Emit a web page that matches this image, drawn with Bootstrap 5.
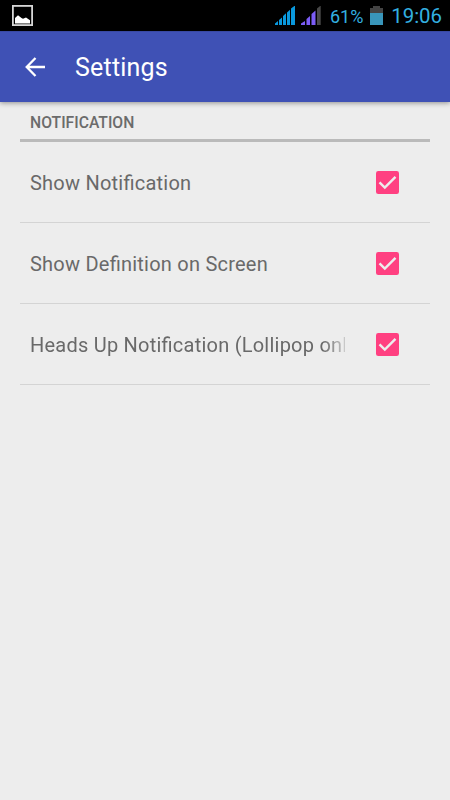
<!DOCTYPE html>
<html lang="en">
<head>
<meta charset="utf-8">
<meta name="viewport" content="width=device-width, initial-scale=1">
<title>Settings</title>
<link href="https://cdn.jsdelivr.net/npm/bootstrap@5.3.0/dist/css/bootstrap.min.css" rel="stylesheet">
<style>
body{background:#ededed;font-family:Roboto,"Liberation Sans",sans-serif;height:800px;overflow:hidden}
svg{display:block;flex:none}
.status-bar{height:31px;background:#000;color:#33b0e0;line-height:31px;padding:0 8px 0 12px}
.signals{gap:6px}
.battery-level{font-size:18px;margin:1px 6px 0 9px;width:34px;white-space:nowrap}
.clock{font-size:20.4px;margin:2px 0 0 7px;width:52px;display:flex;justify-content:flex-end;white-space:nowrap}
.app-bar{height:71px;padding:0 0 0 25px;background:#3f51b5;box-shadow:0 1px 5px rgba(0,0,0,.4);border-top:1px solid #3949a3;position:relative}
.app-title{font-size:25px;font-weight:400;line-height:30px;margin:2px 0 0 29px;letter-spacing:.2px}
.settings{padding:0 20px}
.section-head{height:40px;padding:10px 10px 0;font-size:15.7px;line-height:22px;font-weight:500;color:#6b6b6b;border-bottom:3px solid #bababa}
.setting{height:81px;padding:0 31px 0 10px;border-bottom:1px solid #d4d4d4;cursor:pointer}
.setting-name{width:315px;margin-top:2px;font-size:20px;line-height:28px;letter-spacing:.23px;color:#696969;white-space:nowrap;overflow:hidden;font-feature-settings:"liga" 1}
.fade-end{-webkit-mask-image:linear-gradient(to right,#000 293px,transparent 323px);mask-image:linear-gradient(to right,#000 293px,transparent 323px)}
</style>
<script src="https://cdn.jsdelivr.net/npm/bootstrap@5.3.0/dist/js/bootstrap.bundle.min.js"></script>
</head>
<body>
<div class="status-bar d-flex align-items-center">
  <svg width="21" height="21" viewBox="0 0 21 21"><rect x=".9" y=".9" width="19.2" height="19.2" fill="none" stroke="#d6d6d6" stroke-width="1.8"/><path d="M3 18.500V13l3-2.800L9.500 13l1.500.7 3-1.200 4 2.700v3.300z" fill="#fff"/></svg>
  <div class="d-flex align-items-center ms-auto">
    <div class="signals d-flex">
      <svg width="20" height="20" viewBox="0 0 20 20" fill="#0a98dc"><path d="M0 19V17.500l3-2.500v4zM4 19v-5l3-2.600V19zM8 19v-9l3-2.700V19zM12 19V6.500l3-2.700V19zM16 19V2.500l4-3V19z"/></svg>
      <svg width="20" height="20" viewBox="0 0 20 20" fill="#7b5cf5"><path d="M0 19V17.500l4-2.500v4zM5.500 19v-6L9 10v9zM10.500 19V8l4-3.500V19z"/><path d="M16 19V2.500l3.700-3V19z" fill="#484848"/></svg>
    </div>
    <span class="battery-level">61%</span>
    <svg width="13" height="20" viewBox="0 0 13 20"><path d="M0 2h3V0h7v2h3v6H0z" fill="#444"/><path d="M0 7h13v12H0z" fill="#3996bb"/></svg>
    <span class="clock">19:06</span>
  </div>
</div>
<header class="app-bar d-flex align-items-center text-white">
  <svg width="21" height="20" viewBox="0 0 21 20" fill="none" stroke="#fff" stroke-width="2.300"><path d="M10.500 1L1.700 10l8.800 9M1.700 10H20"/></svg>
  <h1 class="app-title">Settings</h1>
</header>
<main class="settings">
  <h2 class="section-head mb-0">NOTIFICATION</h2>
  <label class="setting d-flex align-items-center justify-content-between"><span class="setting-name">Show Notification</span>
    <svg width="23" height="23" viewBox="0 0 23 23"><rect width="23" height="23" rx="2.300" fill="#ff4081"/><path d="M3.500 11.300l5.300 5.200L19.500 5.800" fill="none" stroke="#ededed" stroke-width="2.400"/></svg></label>
  <label class="setting d-flex align-items-center justify-content-between"><span class="setting-name">Show Definition on Screen</span>
    <svg width="23" height="23" viewBox="0 0 23 23"><rect width="23" height="23" rx="2.300" fill="#ff4081"/><path d="M3.500 11.300l5.300 5.200L19.500 5.800" fill="none" stroke="#ededed" stroke-width="2.400"/></svg></label>
  <label class="setting d-flex align-items-center justify-content-between"><span class="setting-name fade-end">Heads Up Notification (Lollipop only)</span>
    <svg width="23" height="23" viewBox="0 0 23 23"><rect width="23" height="23" rx="2.300" fill="#ff4081"/><path d="M3.500 11.300l5.300 5.200L19.500 5.800" fill="none" stroke="#ededed" stroke-width="2.400"/></svg></label>
</main>
</body>
</html>
